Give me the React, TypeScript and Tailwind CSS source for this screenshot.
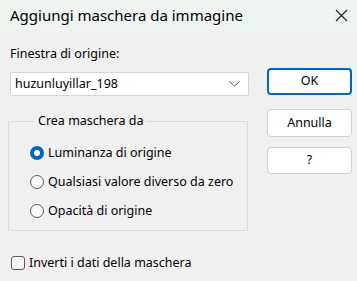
import React from 'react';

const font = { fontFamily: '"Noto Sans", "Open Sans", sans-serif' };

const Radio = ({ checked, label }: { checked?: boolean; label: string }) => (
  <div className="flex items-center h-[29px]">
    {checked ? (
      <span className="w-[14px] h-[14px] rounded-full bg-[#0067c0] flex items-center justify-center">
        <span className="w-[6px] h-[6px] rounded-full bg-white" />
      </span>
    ) : (
      <span className="w-[14px] h-[14px] rounded-full border border-[#5a5a5a] bg-[#f7f7f7]" />
    )}
    <span className="ml-[4px] text-[12.5px] text-black">{label}</span>
  </div>
);

const Button = ({ label, primary, className = '' }: { label: string; primary?: boolean; className?: string }) => (
  <button
    className={`w-[85px] rounded-[4px] bg-white text-[12.5px] text-black ${
      primary ? 'border-2 border-[#0067c0]' : 'border border-[#d0d0d0]'
    } ${className}`}
  >
    {label}
  </button>
);

export default function App() {
  return (
    <div className="w-[357px] h-[281px] bg-[#f0f0f0] overflow-hidden" style={font}>
      <div className="h-[30px] bg-[#eef4f0] flex items-center justify-between pl-[10px] pr-[8px]">
        <span className="text-[15px] text-black">Aggiungi maschera da immagine</span>
        <svg width="13" height="13" viewBox="0 0 13 13" className="mr-[1px]">
          <path d="M1 1L12 12M12 1L1 12" stroke="#222" strokeWidth="1.1" />
        </svg>
      </div>
      <div className="flex pt-[16px]">
        <div className="w-[249px] pl-[8px]">
          <div className="pl-[2px] text-[12.5px] text-black leading-[16px]">Finestra di origine:</div>
          <div className="ml-[2px] mt-[10px] w-[239px] h-[24px] bg-white border border-[#d5d5d5] rounded-[2px] flex items-center justify-between pl-[4px] pr-[8px]">
            <span className="text-[12.5px] text-black">huzunluyillar_198</span>
            <svg width="11" height="6" viewBox="0 0 11 6">
              <path d="M0.5 0.5L5.5 5L10.5 0.5" stroke="#555" fill="none" strokeWidth="1" />
            </svg>
          </div>
          <fieldset className="mt-[16px] w-[240px] h-[119px] border border-[#dcdcdc] rounded-[1px] pl-[21px] pt-[8px]">
            <legend className="ml-[5px] px-[3px] text-[12.5px] text-black">Crea maschera da</legend>
            <Radio checked label="Luminanza di origine" />
            <Radio label="Qualsiasi valore diverso da zero" />
            <Radio label="Opacità di origine" />
          </fieldset>
          <div className="mt-[23px] pl-[3px] flex items-center">
            <span className="w-[14px] h-[14px] rounded-[3px] border border-[#5a5a5a] bg-[#f7f7f7]" />
            <span className="ml-[4px] text-[12.5px] text-black">Inverti i dati della maschera</span>
          </div>
        </div>
        <div className="ml-[18px] pt-[22px] flex flex-col">
          <Button primary label="OK" className="h-[27px]" />
          <Button label="Annulla" className="h-[28px] mt-[14px]" />
          <Button label="?" className="h-[27px] mt-[10px]" />
        </div>
      </div>
    </div>
  );
}
